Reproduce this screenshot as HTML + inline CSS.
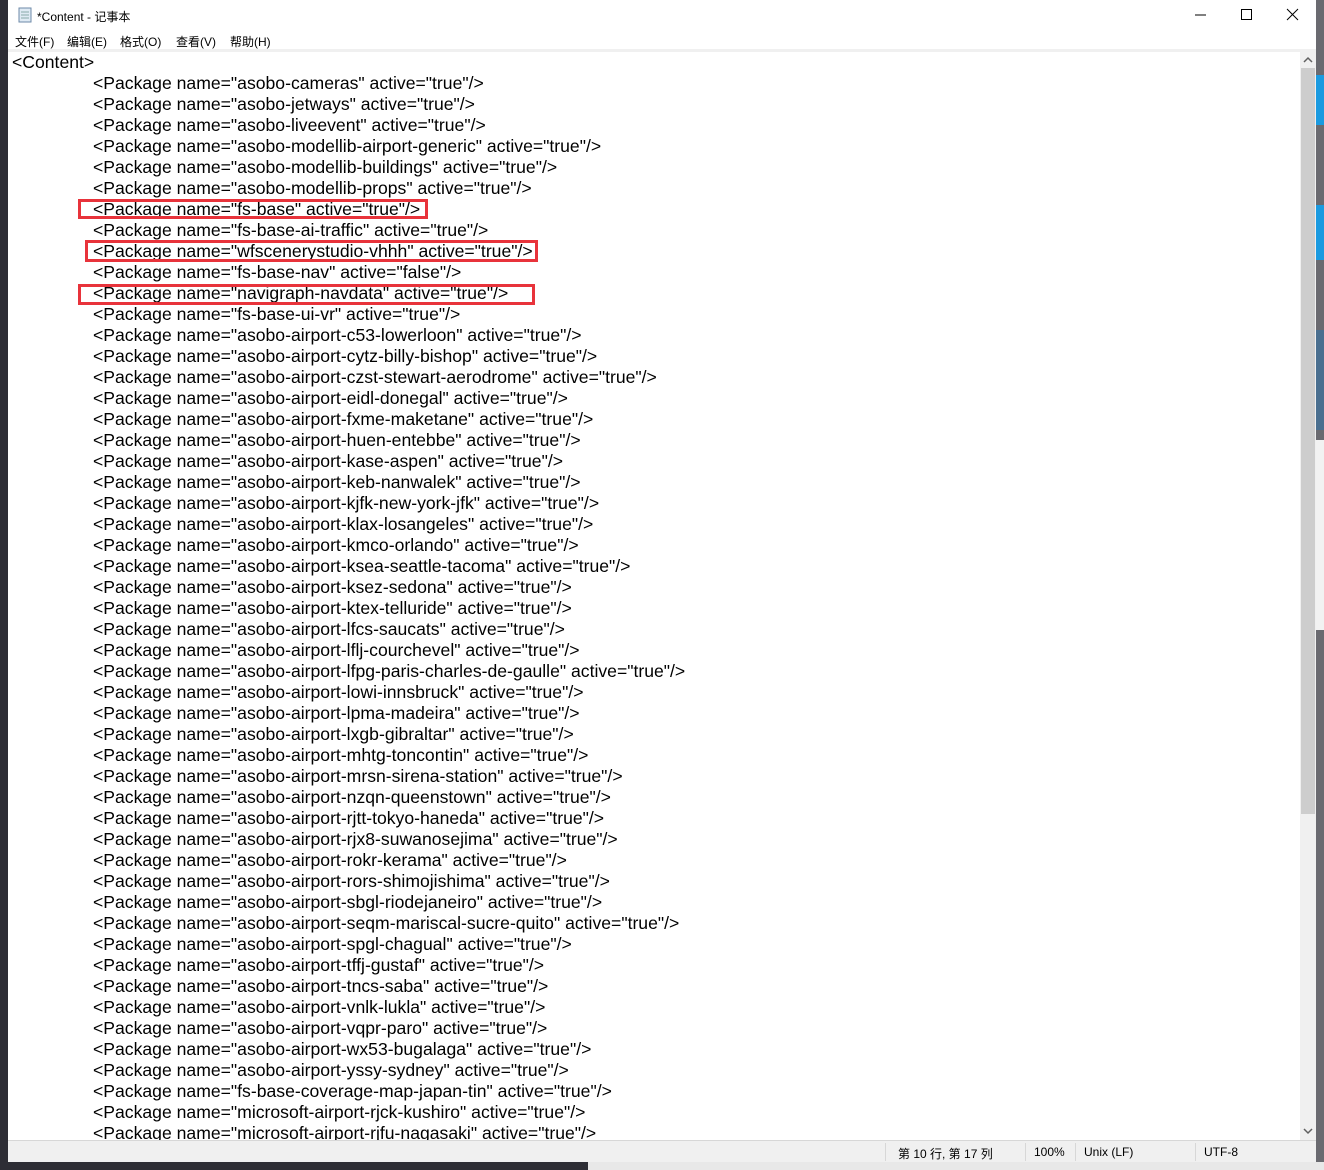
<!DOCTYPE html>
<html><head><meta charset="utf-8"><style>
*{margin:0;padding:0;box-sizing:border-box}
body{width:1324px;height:1170px;overflow:hidden;background:#2d2d35;position:relative;font-family:"Liberation Sans","Noto Sans CJK SC",sans-serif}
.win{position:absolute;left:8px;top:0;width:1308px;height:1162px;background:#fff}
.title{position:absolute;left:0;top:0;width:100%;height:30px;font-size:12px;color:#000}
.title .t{position:absolute;left:29px;top:8px}
.menu{position:absolute;left:0;top:31px;height:18px;font-size:12px}
.menu span{position:absolute;top:2px;white-space:nowrap}
.sep{position:absolute;left:0;top:49px;width:100%;height:3px;background:#f0f0f0}
.text{position:absolute;left:4px;top:52px;width:1288px;height:1088px;overflow:hidden;font-size:17.6px;line-height:21px;white-space:pre;color:#000;tab-size:40.5px;-moz-tab-size:40.5px}
.sb{position:absolute;left:1292px;top:52px;width:16px;height:1088px;background:#f0f0f0}
.thumb{position:absolute;left:1px;top:16px;width:14px;height:746px;background:#cdcdcd}
.status{position:absolute;left:0;top:1140px;width:100%;height:22px;background:#f0f0f0;border-top:1px solid #d7d7d7;font-size:12px}
.status span{position:absolute;top:4px}
.status i{position:absolute;top:2px;width:1px;height:18px;background:#d7d7d7}
.box{position:absolute;border:3px solid #e8333b}
</style></head><body>
<div style="position:absolute;left:1316px;top:0;width:8px;height:1162px;background:#6a6a70"></div>
<div style="position:absolute;left:1316px;top:75px;width:8px;height:50px;background:#1a9ae0"></div>
<div style="position:absolute;left:1316px;top:205px;width:8px;height:55px;background:#1a9ae0"></div>
<div style="position:absolute;left:1316px;top:330px;width:8px;height:100px;background:#4a6f90"></div>
<div style="position:absolute;left:1316px;top:440px;width:8px;height:190px;background:#f2f2f2"></div>
<div style="position:absolute;left:588px;top:1162px;width:736px;height:8px;background:#e8e8e8"></div>
<div class="win">
<div class="title"><svg style="position:absolute;left:9px;top:7px" width="16" height="16"><rect x="2" y="1" width="12" height="14" fill="#dfeaf4" stroke="#6d8aa8"/><path d="M4 5h8M4 8h8M4 11h8" stroke="#8aa"/></svg><span class="t">*Content - 记事本</span>
<svg style="position:absolute;left:1186px;top:9px" width="14" height="12"><path d="M1 6h11" stroke="#000"/></svg>
<svg style="position:absolute;left:1232px;top:8px" width="14" height="14"><rect x="1.5" y="1.5" width="10" height="10" fill="none" stroke="#000"/></svg>
<svg style="position:absolute;left:1278px;top:8px" width="14" height="14"><path d="M1 1l11 11M12 1L1 12" stroke="#000"/></svg></div>
<div class="menu"><span style="left:7px">文件(F)</span><span style="left:59px">编辑(E)</span><span style="left:112px">格式(O)</span><span style="left:168px">查看(V)</span><span style="left:222px">帮助(H)</span></div>
<div class="sep"></div>
<div class="text">&lt;Content&gt;
		&lt;Package name="asobo-cameras" active="true"/&gt;
		&lt;Package name="asobo-jetways" active="true"/&gt;
		&lt;Package name="asobo-liveevent" active="true"/&gt;
		&lt;Package name="asobo-modellib-airport-generic" active="true"/&gt;
		&lt;Package name="asobo-modellib-buildings" active="true"/&gt;
		&lt;Package name="asobo-modellib-props" active="true"/&gt;
		&lt;Package name="fs-base" active="true"/&gt;
		&lt;Package name="fs-base-ai-traffic" active="true"/&gt;
		&lt;Package name="wfscenerystudio-vhhh" active="true"/&gt;
		&lt;Package name="fs-base-nav" active="false"/&gt;
		&lt;Package name="navigraph-navdata" active="true"/&gt;
		&lt;Package name="fs-base-ui-vr" active="true"/&gt;
		&lt;Package name="asobo-airport-c53-lowerloon" active="true"/&gt;
		&lt;Package name="asobo-airport-cytz-billy-bishop" active="true"/&gt;
		&lt;Package name="asobo-airport-czst-stewart-aerodrome" active="true"/&gt;
		&lt;Package name="asobo-airport-eidl-donegal" active="true"/&gt;
		&lt;Package name="asobo-airport-fxme-maketane" active="true"/&gt;
		&lt;Package name="asobo-airport-huen-entebbe" active="true"/&gt;
		&lt;Package name="asobo-airport-kase-aspen" active="true"/&gt;
		&lt;Package name="asobo-airport-keb-nanwalek" active="true"/&gt;
		&lt;Package name="asobo-airport-kjfk-new-york-jfk" active="true"/&gt;
		&lt;Package name="asobo-airport-klax-losangeles" active="true"/&gt;
		&lt;Package name="asobo-airport-kmco-orlando" active="true"/&gt;
		&lt;Package name="asobo-airport-ksea-seattle-tacoma" active="true"/&gt;
		&lt;Package name="asobo-airport-ksez-sedona" active="true"/&gt;
		&lt;Package name="asobo-airport-ktex-telluride" active="true"/&gt;
		&lt;Package name="asobo-airport-lfcs-saucats" active="true"/&gt;
		&lt;Package name="asobo-airport-lflj-courchevel" active="true"/&gt;
		&lt;Package name="asobo-airport-lfpg-paris-charles-de-gaulle" active="true"/&gt;
		&lt;Package name="asobo-airport-lowi-innsbruck" active="true"/&gt;
		&lt;Package name="asobo-airport-lpma-madeira" active="true"/&gt;
		&lt;Package name="asobo-airport-lxgb-gibraltar" active="true"/&gt;
		&lt;Package name="asobo-airport-mhtg-toncontin" active="true"/&gt;
		&lt;Package name="asobo-airport-mrsn-sirena-station" active="true"/&gt;
		&lt;Package name="asobo-airport-nzqn-queenstown" active="true"/&gt;
		&lt;Package name="asobo-airport-rjtt-tokyo-haneda" active="true"/&gt;
		&lt;Package name="asobo-airport-rjx8-suwanosejima" active="true"/&gt;
		&lt;Package name="asobo-airport-rokr-kerama" active="true"/&gt;
		&lt;Package name="asobo-airport-rors-shimojishima" active="true"/&gt;
		&lt;Package name="asobo-airport-sbgl-riodejaneiro" active="true"/&gt;
		&lt;Package name="asobo-airport-seqm-mariscal-sucre-quito" active="true"/&gt;
		&lt;Package name="asobo-airport-spgl-chagual" active="true"/&gt;
		&lt;Package name="asobo-airport-tffj-gustaf" active="true"/&gt;
		&lt;Package name="asobo-airport-tncs-saba" active="true"/&gt;
		&lt;Package name="asobo-airport-vnlk-lukla" active="true"/&gt;
		&lt;Package name="asobo-airport-vqpr-paro" active="true"/&gt;
		&lt;Package name="asobo-airport-wx53-bugalaga" active="true"/&gt;
		&lt;Package name="asobo-airport-yssy-sydney" active="true"/&gt;
		&lt;Package name="fs-base-coverage-map-japan-tin" active="true"/&gt;
		&lt;Package name="microsoft-airport-rjck-kushiro" active="true"/&gt;
		&lt;Package name="microsoft-airport-rjfu-nagasaki" active="true"/&gt;
</div>
<div class="box" style="left:70px;top:199px;width:350px;height:20px"></div>
<div class="box" style="left:77px;top:240px;width:453px;height:22px"></div>
<div class="box" style="left:70px;top:284px;width:457px;height:21px"></div>
<div class="sb"><div class="thumb"></div>
<svg style="position:absolute;left:3px;top:4px" width="10" height="8"><path d="M1 6l4-4 4 4" fill="none" stroke="#606060" stroke-width="1.5"/></svg>
<svg style="position:absolute;left:3px;top:1075px" width="10" height="8"><path d="M1 2l4 4 4-4" fill="none" stroke="#606060" stroke-width="1.5"/></svg></div>
<div class="status"><i style="left:877px"></i><i style="left:1017px"></i><i style="left:1067px"></i><i style="left:1187px"></i>
<span style="left:890px">第 10 行, 第 17 列</span><span style="left:1026px">100%</span><span style="left:1076px">Unix (LF)</span><span style="left:1196px">UTF-8</span></div>
</div>
</body></html>
